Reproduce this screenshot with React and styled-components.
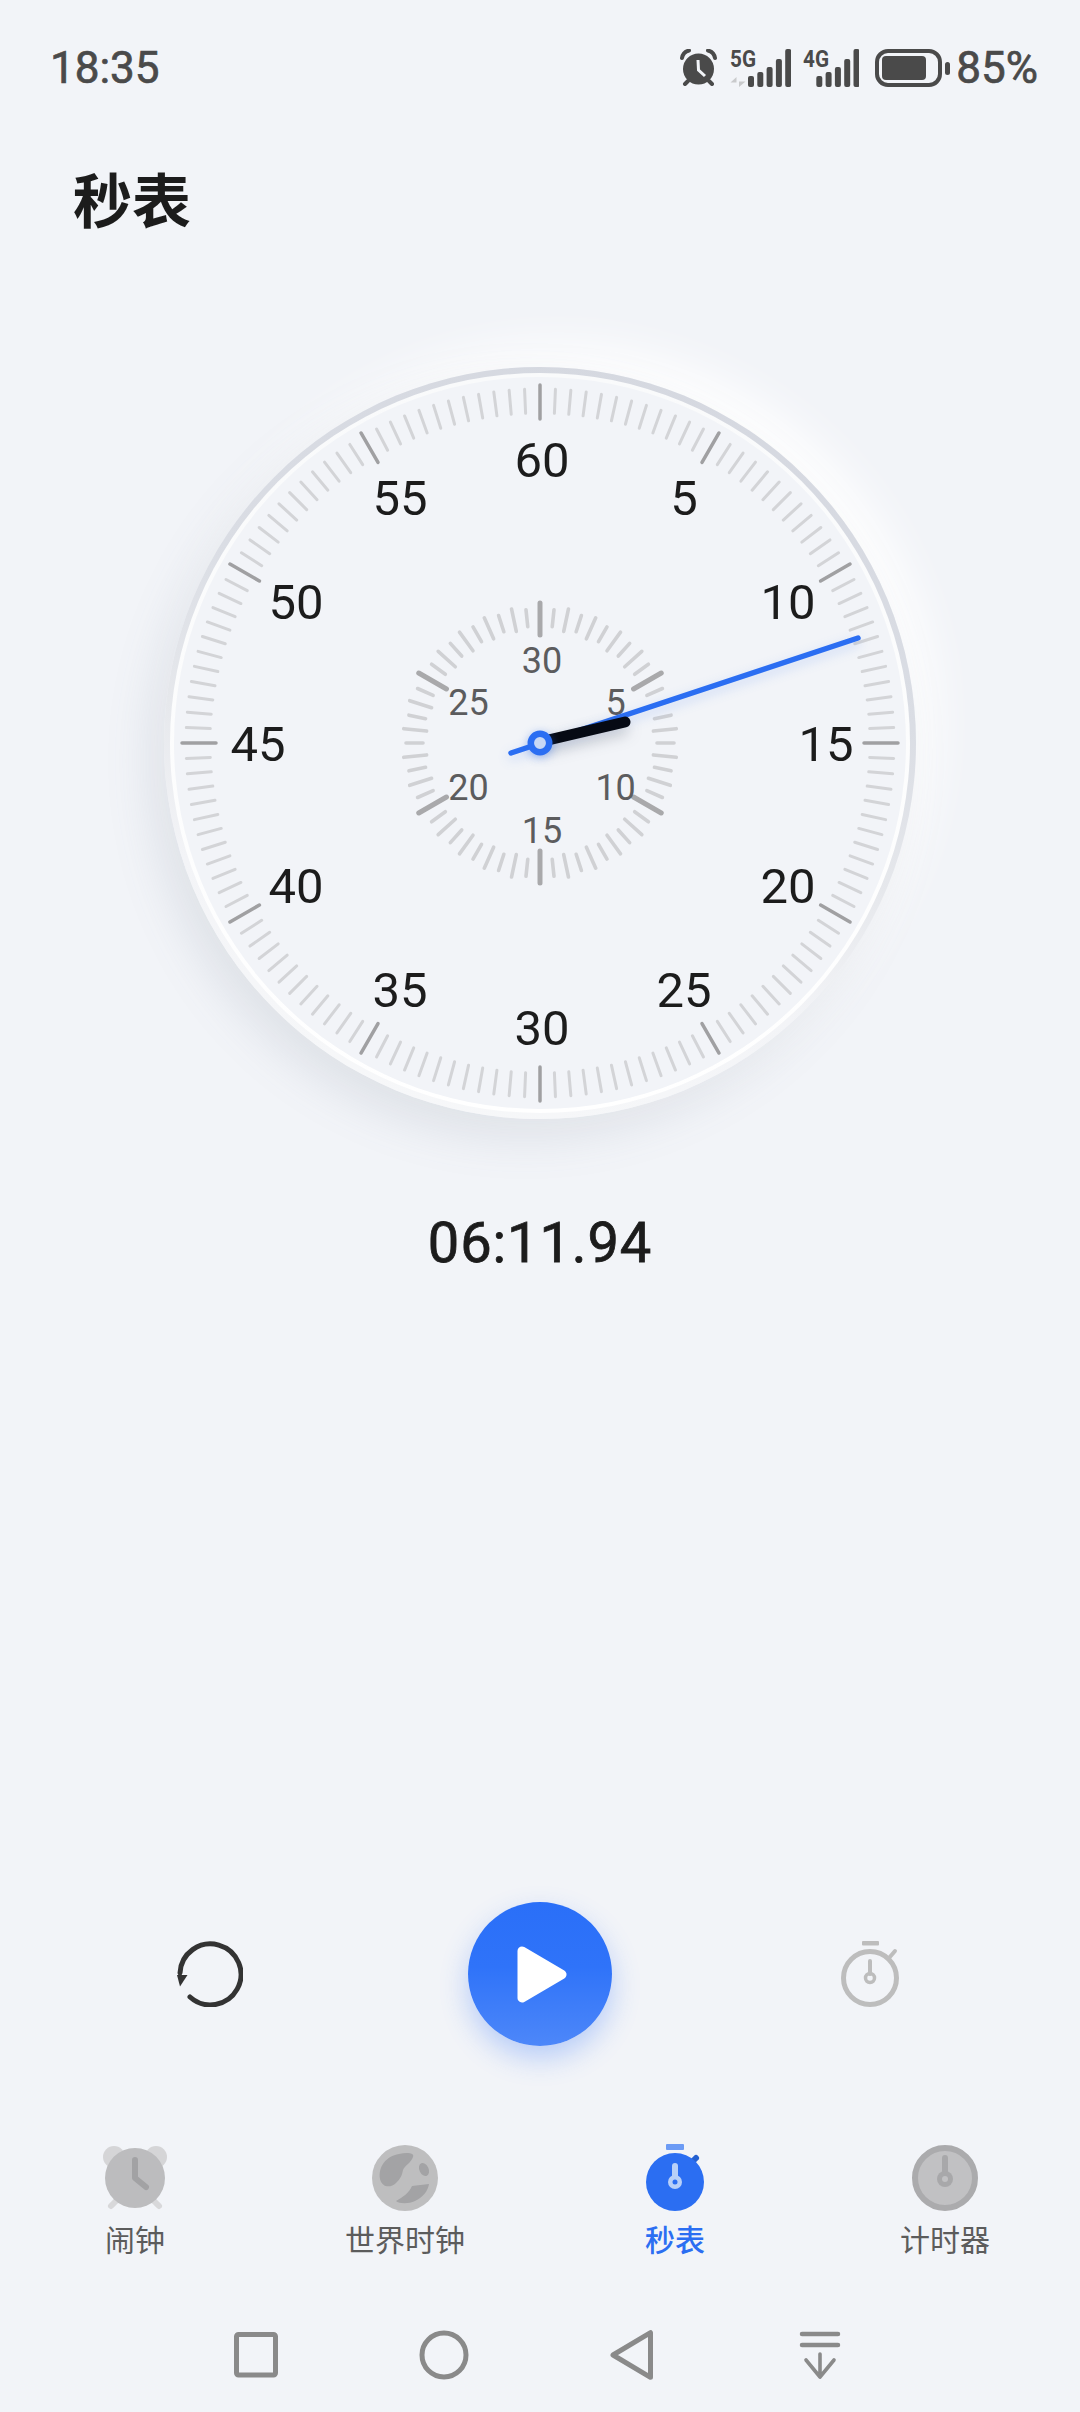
import React from "react";
import styled, { createGlobalStyle } from "styled-components";

const GlobalStyle = createGlobalStyle`
  html, body {
    margin: 0;
    padding: 0;
    background: #f2f4f8;
  }
`;

const cjk = `Roboto, "Noto Sans CJK SC", sans-serif`;

const point = (deg, r) => {
  const rad = (deg * Math.PI) / 180;
  return { x: r * Math.sin(rad), y: -r * Math.cos(rad) };
};

const Page = styled.div`
  width: 1080px;
  height: 2412px;
  display: flex;
  flex-direction: column;
  align-items: center;
  background: #f2f4f8;
  font-family: ${cjk};
  overflow: hidden;
`;

/* status bar */
const StatusBar = styled.div`
  width: 100%;
  height: 135px;
  box-sizing: border-box;
  padding: 0 42px 0 50px;
  display: flex;
  align-items: center;
  justify-content: space-between;
  color: #4a4a4a;
`;

const StatusText = styled.span`
  font-size: ${(p) => p.$size}px;
  font-weight: 400;
  -webkit-text-stroke: 0.7px #4a4a4a;
  line-height: 46px;
  margin-left: ${(p) => p.$ml || 0}px;
`;

const StatusIcons = styled.div`
  display: flex;
  align-items: center;
`;

const StatusSvg = styled.svg`
  display: block;
  flex: none;
  margin-left: ${(p) => p.$ml || 0}px;
`;

const NetLabel = styled.text`
  font-family: Roboto, sans-serif;
  font-size: 24px;
  font-weight: 700;
  fill: #4a4a4a;
`;

const Title = styled.h1`
  width: 100%;
  box-sizing: border-box;
  margin: 0;
  padding-left: 73px;
  height: 126px;
  line-height: 126px;
  font-family: "Noto Sans CJK SC", sans-serif;
  font-size: 59px;
  font-weight: 700;
  color: #1c1c1c;
`;

/* dial */
const Dial = styled.div`
  width: 752px;
  height: 752px;
  margin-top: 106px;
  flex: none;
  box-sizing: border-box;
  padding: 6px;
  border-radius: 50%;
  background: linear-gradient(195deg, #d4d7df 0%, #dadde4 38%, #e6e8ec 56%, #f3f4f7 72%, #f8f9fa 100%);
  box-shadow: -14px 18px 46px rgba(110, 120, 140, 0.15), 18px -20px 46px #ffffff;
`;

const DialRim = styled.div`
  width: 100%;
  height: 100%;
  box-sizing: border-box;
  padding: 4px;
  border-radius: 50%;
  background: linear-gradient(180deg, #f9fafb 0%, #ffffff 100%);
`;

const DialFace = styled.div`
  width: 100%;
  height: 100%;
  border-radius: 50%;
  background: #f2f4f8;
  display: flex;
  align-items: center;
  justify-content: center;
`;

const DialSvg = styled.svg`
  flex: none;
  display: block;
  overflow: visible;
`;

const Tick = styled.line`
  stroke: ${(p) => p.$color};
  stroke-width: ${(p) => p.$w}px;
  stroke-linecap: round;
`;

const DialNumber = styled.text`
  font-family: Roboto, sans-serif;
  font-size: ${(p) => p.$size}px;
  font-weight: 400;
  fill: ${(p) => p.$color};
  text-anchor: middle;
`;

const SecondHand = styled.line`
  stroke: #2b6ef2;
  stroke-width: 5.5px;
  stroke-linecap: round;
  filter: drop-shadow(0 4px 6px rgba(43, 110, 242, 0.22));
`;

const MinuteHand = styled.line`
  stroke: #060a14;
  stroke-width: 11px;
  stroke-linecap: round;
  filter: drop-shadow(-2px 7px 7px rgba(40, 50, 70, 0.25));
`;

const HandPin = styled.circle`
  fill: #c8d8f5;
  stroke: #2b6ef2;
  stroke-width: 6.5px;
  filter: drop-shadow(0 2px 5px rgba(43, 110, 242, 0.4));
`;

const Time = styled.div`
  margin-top: 84px;
  height: 80px;
  line-height: 80px;
  font-size: 56px;
  font-weight: 400;
  -webkit-text-stroke: 0.8px #1c1c1c;
  letter-spacing: 0.9px;
  color: #1c1c1c;
  font-family: Roboto, sans-serif;
`;

/* controls */
const Controls = styled.div`
  margin-top: auto;
  display: grid;
  grid-template-columns: repeat(3, 330px);
  justify-items: center;
  align-items: center;
  height: 144px;
`;

const PlayButton = styled.div`
  width: 144px;
  height: 144px;
  box-sizing: border-box;
  padding-left: 4px;
  border-radius: 50%;
  display: flex;
  align-items: center;
  justify-content: center;
  background: linear-gradient(180deg, #2a6ff8 0%, #2f73f9 45%, #4d87f9 100%);
  box-shadow: 0 12px 28px rgba(60, 120, 248, 0.32);
`;

const IconSvg = styled.svg`
  display: block;
  flex: none;
`;

/* tabs */
const Tabs = styled.div`
  width: 100%;
  margin-top: 97px;
  display: grid;
  grid-template-columns: repeat(4, 270px);
`;

const Tab = styled.div`
  display: flex;
  flex-direction: column;
  align-items: center;
`;

const TabLabel = styled.span`
  margin-top: 3px;
  height: 40px;
  line-height: 40px;
  font-family: "Noto Sans CJK SC", sans-serif;
  font-size: 30px;
  font-weight: ${(p) => (p.$active ? 500 : 400)};
  color: ${(p) => (p.$active ? "#2b6ef2" : "#5c5c5c")};
`;

/* navigation keys */
const NavKeys = styled.div`
  margin-top: 72px;
  margin-bottom: 32px;
  padding-right: 4px;
  display: grid;
  grid-template-columns: repeat(4, 188px);
  justify-items: center;
`;

const mainNumbers = [60, 5, 10, 15, 20, 25, 30, 35, 40, 45, 50, 55];
const subNumbers = [30, 5, 10, 15, 20, 25];

const MainTicks = () =>
  Array.from({ length: 144 }, (_, i) => {
    const deg = i * 2.5;
    const major = i % 12 === 0;
    const a = point(deg, major ? 358 : 354);
    const b = point(deg, major ? 324 : 330);
    return (
      <Tick
        key={i}
        x1={a.x}
        y1={a.y}
        x2={b.x}
        y2={b.y}
        $w={major ? 3.5 : 3}
        $color={major ? "#a0a0a2" : "#d3d4d7"}
      />
    );
  });

const SubTicks = () =>
  Array.from({ length: 60 }, (_, i) => {
    const deg = i * 6;
    const major = i % 10 === 0;
    const long = i % 2 === 0;
    const a = point(deg, major ? 140 : long ? 137 : 134);
    const b = point(deg, major ? 108 : long ? 114 : 117);
    return (
      <Tick
        key={i}
        x1={a.x}
        y1={a.y}
        x2={b.x}
        y2={b.y}
        $w={major ? 5 : 3.6}
        $color={major ? "#a9a9ab" : "#d0d1d4"}
      />
    );
  });

const AlarmStatus = () => (
  <StatusSvg width="37" height="37" viewBox="0 0 37 37">
    <circle cx="18.5" cy="20" r="15.5" fill="#4a4a4a" />
    <path d="M2 9 Q3 3 9 1.5" fill="none" stroke="#4a4a4a" strokeWidth="4" strokeLinecap="round" />
    <path d="M35 9 Q34 3 28 1.5" fill="none" stroke="#4a4a4a" strokeWidth="4" strokeLinecap="round" />
    <path d="M5 35 L8 32 M32 35 L29 32" stroke="#4a4a4a" strokeWidth="4" strokeLinecap="round" />
    <path d="M18 11 L18.5 21 L25 27" fill="none" stroke="#f2f4f8" strokeWidth="3" />
  </StatusSvg>
);

const Bars = ({ x }) =>
  [27, 23, 18, 10, 0].map((top, i) => (
    <rect key={i} x={x + i * 9.3} y={top} width="6" height={38 - top} rx="2" fill="#4a4a4a" />
  ));

const SignalStatus = ({ label, ml, width, barsAt, arrows }) => (
  <StatusSvg $ml={ml} width={width} height="46" viewBox={`0 -4 ${width} 46`}>
    <NetLabel x="0" y="18" textLength="26" lengthAdjust="spacingAndGlyphs">
      {label}
    </NetLabel>
    {arrows && <path d="M6.5 28 L0.5 33.5 H6.5 Z M9 38 L15.5 32.5 H9 Z" fill="#c9cacc" />}
    <Bars x={barsAt} />
  </StatusSvg>
);

const BatteryStatus = () => (
  <StatusSvg $ml={16} width="75" height="38" viewBox="0 0 75 38">
    <rect x="2" y="2" width="63" height="34" rx="11" fill="none" stroke="#4a4a4a" strokeWidth="4" />
    <rect x="7" y="7" width="44" height="24" rx="4" fill="#4a4a4a" />
    <rect x="70" y="13" width="5" height="13" rx="2.5" fill="#4a4a4a" />
  </StatusSvg>
);

const ResetIcon = () => (
  <IconSvg width="66" height="66" viewBox="0 0 66 66">
    <path d="M13 56 A30.5 30.5 0 1 0 3 32" fill="none" stroke="#333333" strokeWidth="5" strokeLinecap="round" />
    <path d="M0 34 H10.5 L3 45.5 Z" fill="#333333" />
  </IconSvg>
);

const PlayIcon = () => (
  <IconSvg width="50" height="57" viewBox="0 0 50 57">
    <polygon points="5,5 45,28.5 5,52" fill="#ffffff" stroke="#ffffff" strokeWidth="9" strokeLinejoin="round" />
  </IconSvg>
);

const LapIcon = () => (
  <IconSvg width="58" height="66" viewBox="0 0 58 66">
    <rect x="21" y="0" width="17" height="4.5" rx="1" fill="#bdbdbd" />
    <circle cx="29" cy="37" r="26.5" fill="none" stroke="#bdbdbd" strokeWidth="5" />
    <path d="M48 17 L54 10" stroke="#bdbdbd" strokeWidth="4" strokeLinecap="round" />
    <path d="M29 20 V33" stroke="#bdbdbd" strokeWidth="4" strokeLinecap="round" />
    <circle cx="29" cy="37" r="4.5" fill="none" stroke="#bdbdbd" strokeWidth="3.5" />
  </IconSvg>
);

const AlarmTab = () => (
  <IconSvg width="72" height="72" viewBox="0 0 72 72">
    <circle cx="15" cy="14" r="11" fill="#d5d5d7" />
    <circle cx="57" cy="14" r="11" fill="#d5d5d7" />
    <path d="M12 63 L18 57 M60 63 L54 57" stroke="#d8d8da" strokeWidth="6" strokeLinecap="round" />
    <circle cx="36" cy="35" r="30" fill="#bcbcbe" />
    <path d="M36 17 V35 L47 44" fill="none" stroke="#a2a2a4" strokeWidth="6" strokeLinecap="round" strokeLinejoin="round" />
  </IconSvg>
);

const GlobeTab = () => (
  <IconSvg width="72" height="72" viewBox="0 0 72 72">
    <circle cx="36" cy="35" r="33" fill="#bebebf" />
    <path d="M11 36 C9 24 17 13 30 11 C38 9 46 10 44 14 C42 20 36 22 34 27 C33 33 31 36 27 40 C22 45 13 45 11 36 Z" fill="#a3a3a5" />
    <ellipse cx="55" cy="26.5" rx="4.6" ry="6.8" transform="rotate(-25 55 26.5)" fill="#a3a3a5" />
    <path d="M27 58 C34 54 40 50 43 43 C48 42 55 42 60 41 C59 48 54 54 46 58 C40 61 30 61 27 58 Z" fill="#a3a3a5" />
  </IconSvg>
);

const StopwatchTab = () => (
  <IconSvg width="72" height="72" viewBox="0 0 72 72">
    <rect x="27" y="1" width="18" height="6" rx="1" fill="#6c9bf5" />
    <path d="M53 19 L57 15" stroke="#2460d0" strokeWidth="6" strokeLinecap="round" />
    <circle cx="36" cy="39" r="29" fill="#2b6ef2" />
    <path d="M36 23 V36" stroke="#b8d0f8" strokeWidth="6" strokeLinecap="round" />
    <circle cx="36" cy="39" r="7" fill="#b8d0f8" />
    <circle cx="36" cy="39" r="2.5" fill="#2b6ef2" />
  </IconSvg>
);

const TimerTab = () => (
  <IconSvg width="72" height="72" viewBox="0 0 72 72">
    <circle cx="36" cy="35" r="30" fill="#c1c1c3" stroke="#ababad" strokeWidth="6" />
    <path d="M36 15 V32" stroke="#a8a8aa" strokeWidth="6" strokeLinecap="round" />
    <circle cx="36" cy="36" r="8" fill="#a8a8aa" />
    <circle cx="36" cy="36" r="3" fill="#c1c1c3" />
  </IconSvg>
);

const navStroke = { fill: "none", stroke: "#8a8a8a", strokeWidth: 5 };

const tabs = [
  { label: "闹钟", Icon: AlarmTab },
  { label: "世界时钟", Icon: GlobeTab },
  { label: "秒表", Icon: StopwatchTab, active: true },
  { label: "计时器", Icon: TimerTab },
];

export default function App() {
  return (
    <Page>
      <GlobalStyle />
      <StatusBar>
        <StatusText $size={44}>18:35</StatusText>
        <StatusIcons>
          <AlarmStatus />
          <SignalStatus label="5G" ml={13} width={61} barsAt={18} arrows />
          <SignalStatus label="4G" ml={12} width={56} barsAt={13.3} />
          <BatteryStatus />
          <StatusText $size={44} $ml={6}>
            85%
          </StatusText>
        </StatusIcons>
      </StatusBar>

      <Title>秒表</Title>

      <Dial>
        <DialRim>
          <DialFace>
            <DialSvg width="732" height="732" viewBox="-366 -366 732 732">
              <MainTicks />
              <SubTicks />
              {mainNumbers.map((n, i) => {
                const p = point(i * 30, 284);
                return (
                  <DialNumber key={n} x={p.x + 2} y={p.y + 18} $size={49} $color="#1c1c1c">
                    {n}
                  </DialNumber>
                );
              })}
              {subNumbers.map((n, i) => {
                const p = point(i * 60, 85);
                return (
                  <DialNumber key={n} x={p.x + 2} y={p.y + 14.5} $size={36} $color="#5c5c5e">
                    {n}
                  </DialNumber>
                );
              })}
              <SecondHand x1="-29" y1="10" x2="318" y2="-105" />
              <MinuteHand x1="4" y1="-2" x2="85" y2="-21" />
              <HandPin cx="0" cy="0" r="9.2" />
            </DialSvg>
          </DialFace>
        </DialRim>
      </Dial>

      <Time>06:11.94</Time>

      <Controls>
        <ResetIcon />
        <PlayButton>
          <PlayIcon />
        </PlayButton>
        <LapIcon />
      </Controls>

      <Tabs>
        {tabs.map(({ label, Icon, active }) => (
          <Tab key={label}>
            <Icon />
            <TabLabel $active={active}>{label}</TabLabel>
          </Tab>
        ))}
      </Tabs>

      <NavKeys>
        <IconSvg width="50" height="50" viewBox="0 0 50 50">
          <rect x="5.5" y="4.5" width="39" height="40.5" rx="2" {...navStroke} />
        </IconSvg>
        <IconSvg width="50" height="50" viewBox="0 0 50 50">
          <circle cx="25" cy="25" r="22" {...navStroke} />
        </IconSvg>
        <IconSvg width="50" height="50" viewBox="0 0 50 50">
          <polygon points="6,25 43.5,2.7 43.5,47.3" {...navStroke} strokeLinejoin="round" />
        </IconSvg>
        <IconSvg width="50" height="50" viewBox="0 0 50 50">
          <path d="M7 4 H43 M7 15 H43" fill="none" stroke="#8a8a8a" strokeWidth="4.5" strokeLinecap="round" />
          <path d="M25 24 V47 M11 30 L25 47 L39 30" fill="none" stroke="#8a8a8a" strokeWidth="3.6" strokeLinecap="round" strokeLinejoin="round" />
        </IconSvg>
      </NavKeys>
    </Page>
  );
}
